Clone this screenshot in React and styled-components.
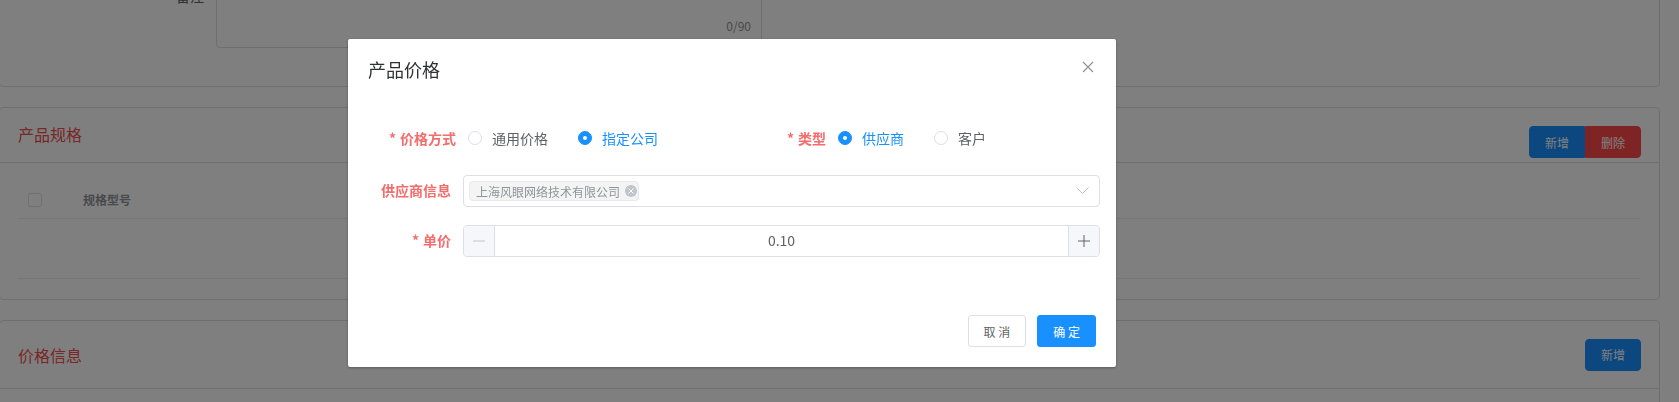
import React from 'react';
import styled, { createGlobalStyle } from 'styled-components';

const GlobalStyle = createGlobalStyle`
  html, body {
    margin: 0;
    padding: 0;
    background: #ffffff;
    overflow: hidden;
  }
  body {
    font-family: "Noto Sans CJK SC", "Noto Sans", "Liberation Sans", sans-serif;
    color: #606266;
  }
  * {
    box-sizing: border-box;
  }
`;

const Page = styled.div`
  height: 402px;
  overflow: hidden;
  padding-right: 19px;
`;

const Card = styled.div`
  margin-left: -1px;
  margin-top: ${({ $first }) => ($first ? '-79px' : '20px')};
  background: #ffffff;
  border: 1px solid #dcdfe6;
  border-radius: 4px;
`;

const RemarkRow = styled.div`
  display: flex;
  align-items: center;
  padding: 21px 0 38px 116px;
`;

const RemarkLabel = styled.div`
  width: 100px;
  padding-right: 12px;
  text-align: right;
  font-size: 14px;
  color: #606266;
`;

const TextArea = styled.div`
  position: relative;
  width: 546px;
  height: 105px;
  border: 1px solid #dcdfe6;
  border-radius: 4px;
`;

const Counter = styled.span`
  position: absolute;
  right: 10px;
  bottom: 13px;
  font-size: 12px;
  color: #909399;
`;

const CardHeader = styled.div`
  display: flex;
  justify-content: space-between;
  align-items: ${({ $tight }) => ($tight ? 'flex-start' : 'center')};
  height: ${({ $tight }) => ($tight ? '55px' : '68px')};
  padding: ${({ $tight }) => ($tight ? '14px 18px 0 18px' : '18px 18px 18px 18px')};
  border-bottom: 1px solid #dcdfe6;
`;

const CardTitle = styled.div`
  font-size: 16px;
  line-height: 24px;
  color: #f05050;
`;

const ButtonGroup = styled.div`
  display: flex;
  margin-top: ${({ $offset }) => $offset || 0};
`;

const PageButton = styled.button`
  height: 32px;
  padding: 0 15px;
  border: 1px solid ${({ $danger }) => ($danger ? '#ff4949' : '#1890ff')};
  background: ${({ $danger }) => ($danger ? '#ff4949' : '#1890ff')};
  color: #ffffff;
  font-family: inherit;
  font-size: 12px;
  border-radius: 0;
  &:first-child {
    border-radius: 4px 0 0 4px;
  }
  &:last-child {
    border-radius: 0 4px 4px 0;
  }
  &:only-child {
    border-radius: 4px;
  }
`;

const CardBody = styled.div`
  padding: 18px 19px 20px 18px;
`;

const Table = styled.div`
  display: grid;
  grid-template-columns: 55px 1fr;
`;

const Cell = styled.div`
  display: flex;
  align-items: center;
  height: ${({ $tall }) => ($tall ? '60px' : '38px')};
  padding: 0 10px;
  border-bottom: 1px solid #ebeef5;
  font-size: 12px;
  font-weight: 700;
  color: #909399;
`;

const CheckBox = styled.span`
  width: 14px;
  height: 14px;
  border: 1px solid #dcdfe6;
  border-radius: 2px;
  background: #ffffff;
`;

const Overlay = styled.div`
  position: fixed;
  inset: 0;
  background: rgba(0, 0, 0, 0.5);
`;

const Dialog = styled.div`
  position: fixed;
  left: 348px;
  top: 39px;
  width: 768px;
  background: #ffffff;
  border-radius: 2px;
  box-shadow: 0 1px 3px rgba(0, 0, 0, 0.3);
`;

const DialogHeader = styled.div`
  position: relative;
  padding: 18px 20px 13px;
`;

const DialogTitle = styled.span`
  font-size: 18px;
  line-height: 24px;
  color: #303133;
`;

const CloseButton = styled.button`
  position: absolute;
  top: 20px;
  right: 20px;
  width: 16px;
  height: 16px;
  padding: 0;
  border: none;
  background: transparent;
  display: flex;
  align-items: center;
  justify-content: center;
`;

const DialogBody = styled.div`
  padding: 27px 20px 30px;
`;

const FormRow = styled.div`
  display: grid;
  grid-template-columns: ${({ $split }) => ($split ? '370px 1fr' : '1fr')};
  padding-left: ${({ $split }) => ($split ? '5px' : '0')};
  margin-right: ${({ $split }) => ($split ? '0' : '-4px')};
  margin-bottom: ${({ $split }) => ($split ? '21px' : '18px')};
`;

const FormItem = styled.div`
  display: flex;
  align-items: center;
  height: 32px;
`;

const Label = styled.label`
  flex: none;
  width: 95px;
  padding-right: 12px;
  padding-bottom: ${({ $raise }) => ($raise ? '3px' : '0')};
  text-align: right;
  font-size: 14px;
  font-weight: 700;
  color: #f56c6c;
`;

const Star = styled.span`
  margin-right: 4px;
`;

const RadioGroup = styled.div`
  display: flex;
  align-items: center;
`;

const Radio = styled.label`
  display: flex;
  align-items: center;
  margin-right: 30px;
  font-size: 14px;
  color: ${({ $checked }) => ($checked ? '#1890ff' : '#606266')};
`;

const RadioDot = styled.span`
  width: 14px;
  height: 14px;
  border-radius: 50%;
  border: 1px solid ${({ $checked }) => ($checked ? '#1890ff' : '#dcdfe6')};
  background: ${({ $checked }) => ($checked ? '#1890ff' : '#ffffff')};
  display: flex;
  align-items: center;
  justify-content: center;
  margin-right: 10px;
  &::after {
    content: '';
    width: 4px;
    height: 4px;
    border-radius: 50%;
    background: #ffffff;
    display: ${({ $checked }) => ($checked ? 'block' : 'none')};
  }
`;

const Select = styled.div`
  flex: 1;
  display: flex;
  align-items: center;
  justify-content: space-between;
  height: 32px;
  padding: 0 10px 0 5px;
  border: 1px solid #dcdfe6;
  border-radius: 4px;
`;

const Tag = styled.span`
  display: flex;
  align-items: center;
  height: 20px;
  padding: 0 1px 0 6px;
  background: #f4f4f5;
  border: 1px solid #e9e9eb;
  border-radius: 4px;
  font-size: 12px;
  color: #909399;
`;

const TagClose = styled.span`
  width: 12px;
  height: 12px;
  margin-left: 5px;
  border-radius: 50%;
  background: #c0c4cc;
  display: flex;
  align-items: center;
  justify-content: center;
`;

const NumberInput = styled.div`
  flex: 1;
  display: flex;
  height: 32px;
  border: 1px solid #dcdfe6;
  border-radius: 4px;
  overflow: hidden;
`;

const StepButton = styled.span`
  flex: none;
  width: 31px;
  display: flex;
  align-items: center;
  justify-content: center;
  background: #f5f7fa;
  border-${({ $side }) => $side}: 1px solid #dcdfe6;
`;

const NumberValue = styled.div`
  flex: 1;
  display: flex;
  align-items: center;
  justify-content: center;
  padding-bottom: 2px;
  font-size: 14px;
  color: #606266;
`;

const DialogFooter = styled.div`
  display: flex;
  justify-content: flex-end;
  gap: 11px;
  padding: 10px 20px 20px;
`;

const FooterButton = styled.button`
  height: 32px;
  padding: 0 15px;
  border-radius: 3px;
  font-family: inherit;
  font-size: 12px;
  border: 1px solid ${({ $primary }) => ($primary ? '#1890ff' : '#dcdfe6')};
  background: ${({ $primary }) => ($primary ? '#1890ff' : '#ffffff')};
  color: ${({ $primary }) => ($primary ? '#ffffff' : '#606266')};
`;

const App = () => (
  <>
    <GlobalStyle />
    <Page>
      <Card $first>
        <RemarkRow>
          <RemarkLabel>备注</RemarkLabel>
          <TextArea>
            <Counter>0/90</Counter>
          </TextArea>
        </RemarkRow>
      </Card>

      <Card>
        <CardHeader $tight>
          <CardTitle>产品规格</CardTitle>
          <ButtonGroup $offset="4px">
            <PageButton>新增</PageButton>
            <PageButton $danger>删除</PageButton>
          </ButtonGroup>
        </CardHeader>
        <CardBody>
          <Table>
            <Cell>
              <CheckBox />
            </Cell>
            <Cell>规格型号</Cell>
            <Cell $tall />
            <Cell $tall />
          </Table>
        </CardBody>
      </Card>

      <Card>
        <CardHeader>
          <CardTitle>价格信息</CardTitle>
          <ButtonGroup>
            <PageButton>新增</PageButton>
          </ButtonGroup>
        </CardHeader>
        <CardBody />
      </Card>
    </Page>

    <Overlay />
    <Dialog>
      <DialogHeader>
        <DialogTitle>产品价格</DialogTitle>
        <CloseButton>
          <svg width="12" height="12" viewBox="0 0 12 12">
            <path d="M1 1 L11 11 M11 1 L1 11" stroke="#909399" strokeWidth="1.2" fill="none" />
          </svg>
        </CloseButton>
      </DialogHeader>
      <DialogBody>
        <FormRow $split>
          <FormItem>
            <Label>
              <Star>*</Star>价格方式
            </Label>
            <RadioGroup>
              <Radio>
                <RadioDot />
                通用价格
              </Radio>
              <Radio $checked>
                <RadioDot $checked />
                指定公司
              </Radio>
            </RadioGroup>
          </FormItem>
          <FormItem>
            <Label>
              <Star>*</Star>类型
            </Label>
            <RadioGroup>
              <Radio $checked>
                <RadioDot $checked />
                供应商
              </Radio>
              <Radio>
                <RadioDot />
                客户
              </Radio>
            </RadioGroup>
          </FormItem>
        </FormRow>

        <FormRow>
          <FormItem>
            <Label $raise>供应商信息</Label>
            <Select>
              <Tag>
                上海风眼网络技术有限公司
                <TagClose>
                  <svg width="6" height="6" viewBox="0 0 6 6">
                    <path d="M0.5 0.5 L5.5 5.5 M5.5 0.5 L0.5 5.5" stroke="#ffffff" strokeWidth="1" />
                  </svg>
                </TagClose>
              </Tag>
              <svg width="13" height="8" viewBox="0 0 13 8">
                <path d="M0.5 0.5 L6.5 6.5 L12.5 0.5" stroke="#c0c4cc" strokeWidth="1" fill="none" />
              </svg>
            </Select>
          </FormItem>
        </FormRow>

        <FormRow>
          <FormItem>
            <Label $raise>
              <Star>*</Star>单价
            </Label>
            <NumberInput>
              <StepButton $side="right">
                <svg width="12" height="2" viewBox="0 0 12 2">
                  <path d="M0 1 L12 1" stroke="#c0c4cc" strokeWidth="1" />
                </svg>
              </StepButton>
              <NumberValue>0.10</NumberValue>
              <StepButton $side="left">
                <svg width="12" height="12" viewBox="0 0 12 12">
                  <path d="M0 6 L12 6 M6 0 L6 12" stroke="#606266" strokeWidth="1" />
                </svg>
              </StepButton>
            </NumberInput>
          </FormItem>
        </FormRow>
      </DialogBody>
      <DialogFooter>
        <FooterButton>取 消</FooterButton>
        <FooterButton $primary>确 定</FooterButton>
      </DialogFooter>
    </Dialog>
  </>
);

export default App;
